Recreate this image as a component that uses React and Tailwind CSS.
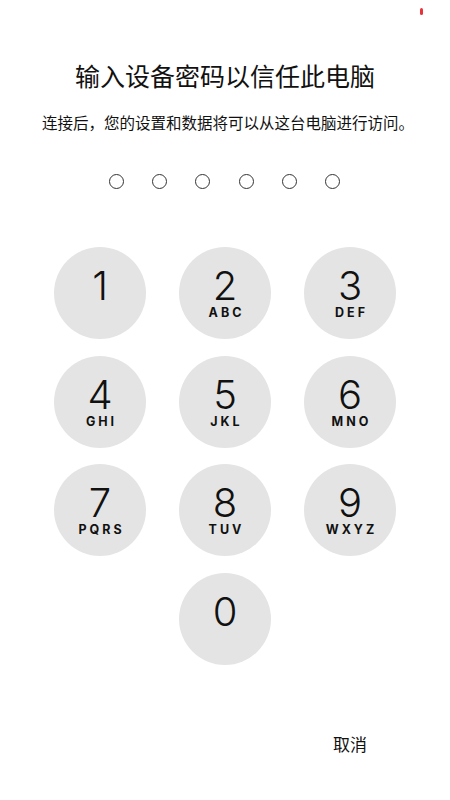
const KEYS = [
  { d: '1', l: '' },
  { d: '2', l: 'ABC' },
  { d: '3', l: 'DEF' },
  { d: '4', l: 'GHI' },
  { d: '5', l: 'JKL' },
  { d: '6', l: 'MNO' },
  { d: '7', l: 'PQRS' },
  { d: '8', l: 'TUV' },
  { d: '9', l: 'WXYZ' },
]

const cjk = { fontFamily: '"Noto Sans CJK SC", "Noto Sans", sans-serif' }
const latin = { fontFamily: 'Inter, "Liberation Sans", sans-serif' }

function Key({ d, l }) {
  return (
    <button className="w-[92px] h-[92px] rounded-full bg-[#e4e4e4] flex flex-col items-center pt-[21px] text-[#111]" style={latin}>
      <span className="block text-[40px] leading-[36px] font-light h-[36px]">{d}</span>
      {l && <span className="block text-[12.5px] leading-[13px] font-bold tracking-[3px] pl-[3px] mt-[2px]">{l}</span>}
    </button>
  )
}

export default function App() {
  return (
    <div className="relative w-[450px] h-[800px] bg-white flex flex-col items-center">
      <div className="absolute left-[420px] top-[8px] w-[3px] h-[7px] rounded-sm bg-[#e8333a]" />

      <h1 className="pt-[58px] text-[25px] leading-[34px] text-[#111]" style={cjk}>
        输入设备密码以信任此电脑
      </h1>
      <p className="mt-[18px] pl-[6px] text-[15.5px] leading-[24px] text-[#111]" style={cjk}>
        连接后，您的设置和数据将可以从这台电脑进行访问。
      </p>

      <div className="mt-[40px] flex gap-[28.3px] pr-[1px]">
        {[0, 1, 2, 3, 4, 5].map((i) => (
          <div key={i} className="w-[15px] h-[15px] rounded-full border-[1.5px] border-[#333]" />
        ))}
      </div>

      <div className="mt-[58px] grid grid-cols-[92px_92px_92px] gap-x-[33px] gap-y-[16.5px]">
        {KEYS.map((k) => (
          <Key key={k.d} d={k.d} l={k.l} />
        ))}
        <div />
        <Key d="0" l="" />
        <div />
      </div>

      <div className="mt-[67.5px] grid grid-cols-[92px_92px_92px] gap-x-[33px]">
        <div />
        <div />
        <button className="text-[17px] leading-[24px] text-[#111] text-center" style={cjk}>
          取消
        </button>
      </div>
    </div>
  )
}
